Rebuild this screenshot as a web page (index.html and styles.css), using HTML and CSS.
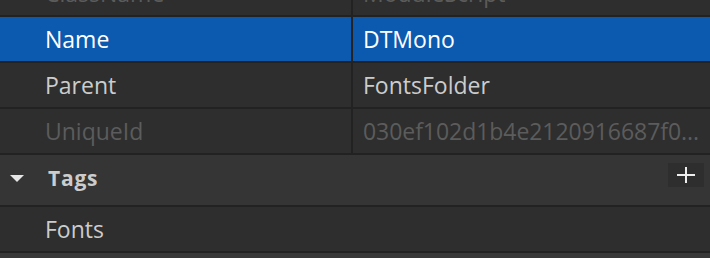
FILE: index.html
```html
<!DOCTYPE html>
<html lang="en">
<head>
<meta charset="utf-8">
<title>Properties</title>
<link rel="stylesheet" href="styles.css">
</head>
<body>
<div class="panel">
  <div class="row">
    <div class="cell name dim">ClassName</div>
    <div class="cell value dim">ModuleScript</div>
  </div>
  <div class="row selected">
    <div class="cell name">Name</div>
    <div class="cell value">DTMono</div>
  </div>
  <div class="row">
    <div class="cell name">Parent</div>
    <div class="cell value">FontsFolder</div>
  </div>
  <div class="row">
    <div class="cell name dim">UniqueId</div>
    <div class="cell value dim hash">030ef102d1b4e2120916687f0...</div>
  </div>
  <div class="section">
    <svg class="caret" width="14" height="8" viewBox="0 0 14 8"><polygon points="0,0 14,0 7,7" fill="#e6e6e6"/></svg>
    <span class="section-title">Tags</span>
    <button class="add" type="button" aria-label="Add tag">
      <svg width="18" height="16" viewBox="0 0 18 16"><rect x="0" y="7" width="18" height="2" fill="#eeeeee"/><rect x="8" y="0" width="2" height="16" fill="#eeeeee"/></svg>
    </button>
  </div>
  <div class="tag-row">Fonts</div>
  <div class="footer"></div>
</div>
</body>
</html>
```

FILE: styles.css
```css
html, body {
  margin: 0;
  padding: 0;
  background: #2e2e2e;
  overflow: hidden;
}

.panel {
  margin-top: -29px;
  font-family: "Open Sans", "Noto Sans", sans-serif;
  font-size: 23px;
  color: #cccccc;
}

.row {
  display: grid;
  grid-template-columns: 353px 1fr;
  height: 44px;
  border-bottom: 2px solid #222222;
  background: #2e2e2e;
}

.row.selected {
  background: #0c5ab0;
  color: #ffffff;
}

.cell {
  display: flex;
  align-items: center;
  white-space: nowrap;
  overflow: hidden;
}

.name {
  padding-left: 45px;
  border-right: 2px solid #222222;
}

.value {
  padding-left: 10px;
}

.dim {
  color: #5c5c5c;
}

.hash {
  letter-spacing: -0.05px;
}

.section {
  display: flex;
  align-items: center;
  height: 52px;
  background: #353535;
  border-bottom: 2px solid #222222;
  padding-bottom: 4px;
  box-sizing: border-box;
}

.caret {
  margin-left: 10px;
  margin-top: 2px;
}

.section-title {
  margin-left: 24px;
  font-weight: 700;
  font-size: 21px;
  letter-spacing: 0.8px;
  color: #cccccc;
}

.add {
  margin-left: auto;
  margin-right: 6px;
  margin-bottom: 6px;
  width: 36px;
  height: 24px;
  border: 0;
  padding: 0;
  background: #2e2e2e;
  display: flex;
  align-items: center;
  justify-content: center;
}

.tag-row {
  height: 44px;
  display: flex;
  align-items: center;
  padding-left: 45px;
  border-bottom: 2px solid #222222;
  background: #2e2e2e;
}

.footer {
  height: 20px;
  background: #383838;
}
```
